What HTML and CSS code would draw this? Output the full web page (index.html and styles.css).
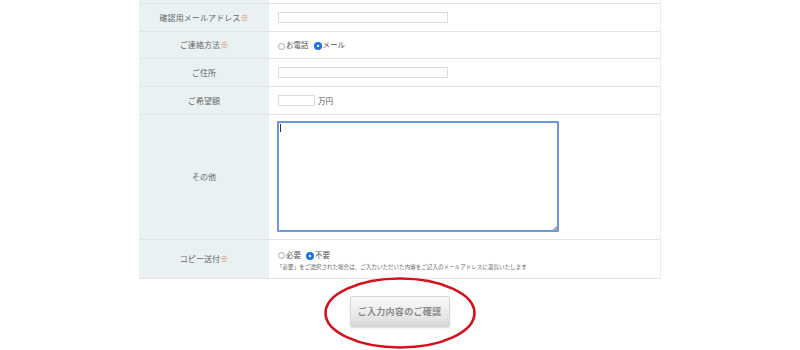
FILE: index.html
```html
<!DOCTYPE html>
<html lang="ja">
<head>
<meta charset="utf-8">
<link rel="stylesheet" href="styles.css">
</head>
<body>
<div class="form">
  <div class="row spacer"><div class="label"></div><div class="field"></div></div>
  <div class="row r1">
    <div class="label">確認用メールアドレス<span class="req">※</span></div>
    <div class="field"><span class="input wide"></span></div>
  </div>
  <div class="row r2">
    <div class="label">ご連絡方法<span class="req">※</span></div>
    <div class="field">
      <span class="radio"></span><span class="opt">お電話</span>
      <span class="radio on"></span><span class="opt">メール</span>
    </div>
  </div>
  <div class="row r3">
    <div class="label">ご住所</div>
    <div class="field"><span class="input wide"></span></div>
  </div>
  <div class="row r4">
    <div class="label">ご希望額</div>
    <div class="field"><span class="input short"></span><span class="unit">万円</span></div>
  </div>
  <div class="row r5">
    <div class="label">その他</div>
    <div class="field"><div class="textarea"><span class="caret"></span><span class="grip"></span></div></div>
  </div>
  <div class="row r6">
    <div class="label">コピー送付<span class="req">※</span></div>
    <div class="field col">
      <div class="opts">
        <span class="radio"></span><span class="opt">必要</span>
        <span class="radio on"></span><span class="opt">不要</span>
      </div>
      <div class="note">「必要」をご選択された場合は、ご入力いただいた内容をご記入のメールアドレスに返信いたします</div>
    </div>
  </div>
</div>
<div class="submit">
  <div class="btnwrap">
    <span class="btn">ご入力内容のご確認</span>
    <svg class="circle" width="154" height="74" viewBox="0 0 154 74">
      <ellipse cx="77" cy="37" rx="74.5" ry="34.5" fill="none" stroke="#d2121c" stroke-width="2.6"/>
    </svg>
  </div>
</div>
</body>
</html>
```
FILE: styles.css
```css
* { box-sizing: border-box; }
html, body { margin: 0; padding: 0; background: #fff; }
body {
  font-family: "Noto Sans CJK JP", "Noto Sans", sans-serif;
  color: #555;
  font-size: 8px;
  width: 800px;
  height: 350px;
  overflow: hidden;
}
.form {
  width: 522px;
  margin: 0 0 0 139px;
  border-right: 1px solid #ececec;
}
.row {
  display: grid;
  grid-template-columns: 130px 1fr;
  border-bottom: 1px solid #e4e4e4;
}
.label {
  background: #e9f1f3;
  display: flex;
  align-items: center;
  justify-content: center;
  line-height: 1;
  color: #666;
  font-size: 8px;
  letter-spacing: 0.1px;
}
.req { color: #e2703f; }
.field {
  display: flex;
  align-items: center;
  padding-left: 8px;
}
.spacer { height: 4px; }
.r1 { height: 28px; }
.r2 { height: 27px; }
.r3 { height: 28px; }
.r4 { height: 28px; }
.r5 { height: 125px; }
.r6 { height: 39px; }
.input {
  display: block;
  height: 11px;
  border: 1px solid #dcdcdc;
  background: #fff;
}
.input.wide { width: 170px; margin-left: 1px; }
.input.short { width: 37px; margin-left: 1px; }
.unit { margin-left: 3px; font-size: 7.5px; color: #555; }
.radio {
  display: inline-block;
  width: 7px;
  height: 7px;
  border: 1px solid #aaa;
  border-radius: 50%;
  background: #fff;
  margin: 2px 1px 0 2px;
}
.radio.on {
  width: 8px;
  height: 8px;
  border: none;
  background: radial-gradient(circle, #fff 0 1.3px, #1a73e8 1.6px);
  margin-left: 5px;
}
.opt { font-size: 7.5px; color: #555; line-height: 1; }
.r2 .field { padding-left: 7px; }
.r5 .field { align-items: flex-start; padding-left: 8px; padding-top: 6px; }
.textarea {
  position: relative;
  width: 282px;
  height: 111px;
  border: 2px solid #6e99d8;
  border-radius: 1px;
  background: #fff;
}
.caret {
  position: absolute;
  left: 1px;
  top: 1px;
  width: 1px;
  height: 8px;
  background: #333;
}
.grip {
  position: absolute;
  right: 0;
  bottom: 0;
  width: 4px;
  height: 4px;
  background: linear-gradient(135deg, transparent 50%, #aaa 50%);
}
.field.col {
  flex-direction: column;
  align-items: flex-start;
  justify-content: center;
  padding-left: 8px;
  padding-top: 2px;
}
.opts { display: flex; align-items: center; }
.opts .radio:first-child { margin-left: 1px; }
.note {
  font-size: 5.5px;
  color: #666;
  margin-top: 3px;
  white-space: nowrap;
  letter-spacing: 0.05px;
}
.submit {
  display: flex;
  justify-content: center;
  padding-top: 17px;
}
.btnwrap { position: relative; margin-left: -1px; }
.btn {
  display: flex;
  align-items: center;
  justify-content: center;
  width: 100px;
  height: 31px;
  border: 1px solid #d6d6d6;
  border-radius: 2px;
  background: linear-gradient(#fafafa, #e6e6e6 70%, #d8d8d8);
  box-shadow: 0 1px 2px rgba(0,0,0,0.15);
  font-size: 9px;
  font-weight: bold;
  color: #8a8a8a;
  letter-spacing: 0.3px;
}
.circle {
  position: absolute;
  left: -27px;
  top: -20px;
}
```
